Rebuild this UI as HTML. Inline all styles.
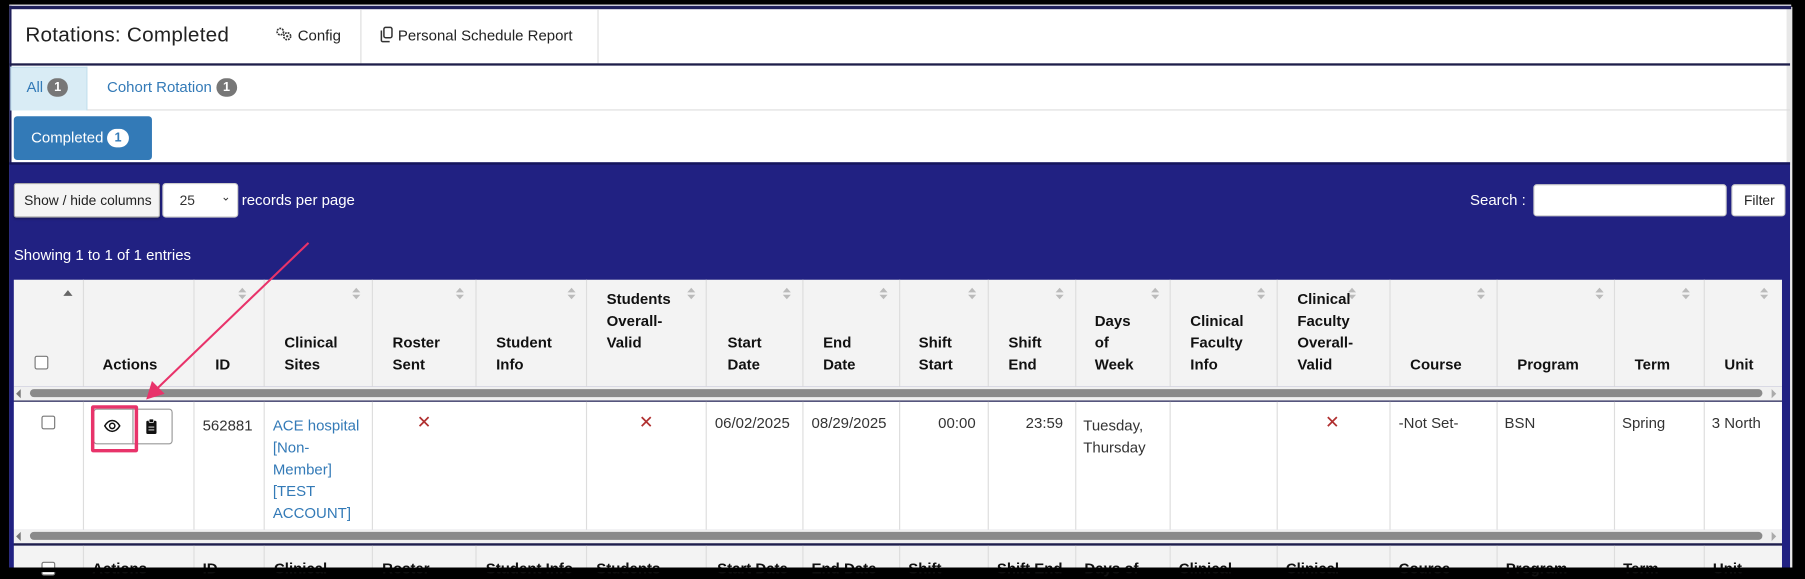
<!DOCTYPE html>
<html><head><meta charset="utf-8">
<style>
*{box-sizing:border-box;margin:0;padding:0}
html,body{width:1805px;height:572px;overflow:hidden;background:#000}
#s{position:absolute;left:0;top:0;width:1568px;height:497px;transform:scale(1.15115);transform-origin:0 0;font-family:"Liberation Sans",Arial,sans-serif;font-size:13px;color:#333}
.a{position:absolute}
.hd{font-weight:bold;color:#111;line-height:19px}
.sort{position:absolute;top:10px;width:8px;height:14px}
.x{color:#b03030;font-size:15px}
.lnk{color:#337ab7}
.cb{position:absolute;width:12px;height:12px;border:1px solid #777;border-radius:2px;background:#fff}
.vl{position:absolute;width:1px;background:#ddd}
.badge{display:inline-block;background:#777;color:#fff;border-radius:9px;font-size:11px;font-weight:bold;padding:1px 6px;line-height:14px;vertical-align:1px}
</style></head><body>
<div id="s">
<!-- frame -->
<div class="a" style="left:8px;top:4px;width:1548px;height:489px;background:#fff"></div>
<div class="a" style="left:1552px;top:6px;width:5px;height:487px;background:#e8e8e8"></div>
<div class="a" style="left:8px;top:5px;width:1548px;height:3px;background:#1e1e5a"></div>
<div class="a" style="left:8px;top:5px;width:2px;height:488px;background:#1e1e5a"></div>
<!-- header -->
<div class="a" style="left:22px;top:20px;font-size:18px;color:#222;letter-spacing:0.2px">Rotations: Completed</div>
<div class="a" style="left:239px;top:23px;font-size:13px;color:#222">
<svg width="16" height="13" viewBox="0 0 16 13" style="vertical-align:-1px"><circle cx="4.5" cy="4.5" r="2.8" fill="none" stroke="#333" stroke-width="1.4" stroke-dasharray="1.6 0.8"/><circle cx="10.5" cy="8.5" r="3" fill="none" stroke="#333" stroke-width="1.4" stroke-dasharray="1.6 0.8"/><circle cx="10.5" cy="8.5" r="1" fill="#333"/></svg> Config</div>
<div class="a" style="left:313px;top:8px;width:1px;height:47px;background:#ddd"></div>
<div class="a" style="left:330px;top:23px;font-size:13px;color:#222">
<svg width="12" height="14" viewBox="0 0 12 14" style="vertical-align:-2px"><rect x="3.5" y="0.8" width="7" height="9" rx="1.5" fill="none" stroke="#333" stroke-width="1.3"/><path d="M1.3 3.5v8.5a1.2 1.2 0 0 0 1.2 1.2h6" fill="none" stroke="#333" stroke-width="1.3"/></svg> Personal Schedule Report</div>
<div class="a" style="left:519px;top:8px;width:1px;height:47px;background:#ddd"></div>
<div class="a" style="left:8px;top:55px;width:1547px;height:2px;background:#1e1e4a"></div>
<!-- tabs -->
<div class="a" style="left:9px;top:58px;width:67px;height:38px;background:#d9ecf5;border:1px solid #c4e0ee;border-bottom:none"></div>
<div class="a" style="left:23px;top:68px;color:#337ab7">All <span class="badge">1</span></div>
<div class="a" style="left:93px;top:68px;color:#337ab7">Cohort Rotation <span class="badge">1</span></div>
<div class="a" style="left:76px;top:95px;width:1479px;height:1px;background:#ddd"></div>
<div class="a" style="left:12px;top:101px;width:120px;height:38px;background:#337ab7;border-radius:3px;color:#fff;padding:11px 0 0 15px">Completed <span class="badge" style="background:#fff;color:#337ab7">1</span></div>
<!-- navy -->
<div class="a" style="left:8px;top:141px;width:1547px;height:352px;background:#212182"></div>
<div class="a" style="left:8px;top:141px;width:1547px;height:2px;background:#15155a"></div>
<div class="a" style="left:12px;top:159px;width:127px;height:30px;background:#f4f4f4;border:1px solid #aaa;border-radius:2px;color:#222;font-size:12px;padding:7px 0 0 8px;box-shadow:0 1px 2px rgba(0,0,0,.3)">Show / hide columns</div>
<div class="a" style="left:141px;top:159px;width:66px;height:30px;background:#fff;border:1px solid #ccc;border-radius:3px;color:#333;font-size:12px;padding:7px 0 0 14px">25<span style="position:absolute;left:50px;top:6px;font-size:10px">&#8964;</span></div>
<div class="a" style="left:210px;top:166px;color:#fff">records per page</div>
<div class="a" style="left:1277px;top:166px;color:#fff">Search :</div>
<div class="a" style="left:1332px;top:160px;width:168px;height:28px;background:#fff;border:1px solid #ccc;border-radius:3px"></div>
<div class="a" style="left:1504px;top:160px;width:47px;height:28px;background:#fff;border:1px solid #ccc;border-radius:3px;color:#222;font-size:12px;padding:6px 0 0 10px">Filter</div>
<div class="a" style="left:12px;top:214px;color:#fff">Showing 1 to 1 of 1 entries</div>
<!-- table -->
<div class="a" style="left:12px;top:243px;width:1536px;height:93px;background:#f3f3f3"></div>
<div class="a" style="left:12px;top:336px;width:1536px;height:12px;background:#f0f0f0"></div>
<div class="a" style="left:26px;top:338px;width:1505px;height:7px;background:#8a8a8a;border-radius:4px"></div>
<div class="a" style="left:14px;top:338px;width:0;height:0;border-top:4px solid transparent;border-bottom:4px solid transparent;border-right:4px solid #777"></div>
<div class="a" style="left:1539px;top:338px;width:0;height:0;border-top:4px solid transparent;border-bottom:4px solid transparent;border-left:4px solid #aaa"></div>
<div class="a" style="left:12px;top:348px;width:1536px;height:1px;background:#1e1e4a"></div>
<div class="a" style="left:12px;top:349px;width:1536px;height:111px;background:#fff"></div>
<div class="a" style="left:12px;top:460px;width:1536px;height:12px;background:#f0f0f0"></div>
<div class="a" style="left:26px;top:462px;width:1505px;height:7px;background:#8a8a8a;border-radius:4px"></div>
<div class="a" style="left:14px;top:462px;width:0;height:0;border-top:4px solid transparent;border-bottom:4px solid transparent;border-right:4px solid #777"></div>
<div class="a" style="left:1539px;top:462px;width:0;height:0;border-top:4px solid transparent;border-bottom:4px solid transparent;border-left:4px solid #aaa"></div>
<div class="a" style="left:12px;top:472px;width:1536px;height:2px;background:#1e1e4a"></div>
<div class="a" style="left:12px;top:474px;width:1536px;height:19px;background:#f3f3f3"></div>

<!-- vertical lines -->
<div class="vl" style="left:72px;top:243px;height:93px"></div><div class="vl" style="left:72px;top:349px;height:111px"></div><div class="vl" style="left:72px;top:474px;height:19px"></div>
<div class="vl" style="left:168px;top:243px;height:93px"></div><div class="vl" style="left:168px;top:349px;height:111px"></div><div class="vl" style="left:168px;top:474px;height:19px"></div>
<div class="vl" style="left:229px;top:243px;height:93px"></div><div class="vl" style="left:229px;top:349px;height:111px"></div><div class="vl" style="left:229px;top:474px;height:19px"></div>
<div class="vl" style="left:323px;top:243px;height:93px"></div><div class="vl" style="left:323px;top:349px;height:111px"></div><div class="vl" style="left:323px;top:474px;height:19px"></div>
<div class="vl" style="left:413px;top:243px;height:93px"></div><div class="vl" style="left:413px;top:474px;height:19px"></div>
<div class="vl" style="left:509px;top:243px;height:93px"></div><div class="vl" style="left:509px;top:349px;height:111px"></div><div class="vl" style="left:509px;top:474px;height:19px"></div>
<div class="vl" style="left:613px;top:243px;height:93px"></div><div class="vl" style="left:613px;top:349px;height:111px"></div><div class="vl" style="left:613px;top:474px;height:19px"></div>
<div class="vl" style="left:697px;top:243px;height:93px"></div><div class="vl" style="left:697px;top:349px;height:111px"></div><div class="vl" style="left:697px;top:474px;height:19px"></div>
<div class="vl" style="left:781px;top:243px;height:93px"></div><div class="vl" style="left:781px;top:349px;height:111px"></div><div class="vl" style="left:781px;top:474px;height:19px"></div>
<div class="vl" style="left:858px;top:243px;height:93px"></div><div class="vl" style="left:858px;top:349px;height:111px"></div><div class="vl" style="left:858px;top:474px;height:19px"></div>
<div class="vl" style="left:934px;top:243px;height:93px"></div><div class="vl" style="left:934px;top:349px;height:111px"></div><div class="vl" style="left:934px;top:474px;height:19px"></div>
<div class="vl" style="left:1016px;top:243px;height:93px"></div><div class="vl" style="left:1016px;top:349px;height:111px"></div><div class="vl" style="left:1016px;top:474px;height:19px"></div>
<div class="vl" style="left:1109px;top:243px;height:93px"></div><div class="vl" style="left:1109px;top:349px;height:111px"></div><div class="vl" style="left:1109px;top:474px;height:19px"></div>
<div class="vl" style="left:1207px;top:243px;height:93px"></div><div class="vl" style="left:1207px;top:349px;height:111px"></div><div class="vl" style="left:1207px;top:474px;height:19px"></div>
<div class="vl" style="left:1300px;top:243px;height:93px"></div><div class="vl" style="left:1300px;top:349px;height:111px"></div><div class="vl" style="left:1300px;top:474px;height:19px"></div>
<div class="vl" style="left:1402px;top:243px;height:93px"></div><div class="vl" style="left:1402px;top:349px;height:111px"></div><div class="vl" style="left:1402px;top:474px;height:19px"></div>
<div class="vl" style="left:1480px;top:243px;height:93px"></div><div class="vl" style="left:1480px;top:349px;height:111px"></div><div class="vl" style="left:1480px;top:474px;height:19px"></div>

<!-- sort arrows -->
<div class="a" style="left:55px;top:252px;width:0;height:0;border-left:4px solid transparent;border-right:4px solid transparent;border-bottom:5px solid #666"></div>
<svg class="a" style="left:0;top:0" width="1568" height="300"><g fill="#bbb">
<path d="M207 254l3.5-4 3.5 4zM207 256l3.5 4 3.5-4z"/>
<path d="M306 254l3.5-4 3.5 4zM306 256l3.5 4 3.5-4z"/>
<path d="M396 254l3.5-4 3.5 4zM396 256l3.5 4 3.5-4z"/>
<path d="M493 254l3.5-4 3.5 4zM493 256l3.5 4 3.5-4z"/>
<path d="M597 254l3.5-4 3.5 4zM597 256l3.5 4 3.5-4z"/>
<path d="M680 254l3.5-4 3.5 4zM680 256l3.5 4 3.5-4z"/>
<path d="M764 254l3.5-4 3.5 4zM764 256l3.5 4 3.5-4z"/>
<path d="M841 254l3.5-4 3.5 4zM841 256l3.5 4 3.5-4z"/>
<path d="M917 254l3.5-4 3.5 4zM917 256l3.5 4 3.5-4z"/>
<path d="M1000 254l3.5-4 3.5 4zM1000 256l3.5 4 3.5-4z"/>
<path d="M1092 254l3.5-4 3.5 4zM1092 256l3.5 4 3.5-4z"/>
<path d="M1171 254l3.5-4 3.5 4zM1171 256l3.5 4 3.5-4z"/>
<path d="M1283 254l3.5-4 3.5 4zM1283 256l3.5 4 3.5-4z"/>
<path d="M1386 254l3.5-4 3.5 4zM1386 256l3.5 4 3.5-4z"/>
<path d="M1386 254l3.5-4 3.5 4z"/>
<path d="M1461 254l3.5-4 3.5 4zM1461 256l3.5 4 3.5-4z"/>
<path d="M1529 254l3.5-4 3.5 4zM1529 256l3.5 4 3.5-4z"/>
</g></svg>

<!-- header text (bottom line at 317 center) -->
<div class="cb" style="left:30px;top:309px"></div>
<div class="a hd" style="left:89px;top:307px">Actions</div>
<div class="a hd" style="left:187px;top:307px">ID</div>
<div class="a hd" style="left:247px;top:288px">Clinical<br>Sites</div>
<div class="a hd" style="left:341px;top:288px">Roster<br>Sent</div>
<div class="a hd" style="left:431px;top:288px">Student<br>Info</div>
<div class="a hd" style="left:527px;top:250px">Students<br>Overall-<br>Valid</div>
<div class="a hd" style="left:632px;top:288px">Start<br>Date</div>
<div class="a hd" style="left:715px;top:288px">End<br>Date</div>
<div class="a hd" style="left:798px;top:288px">Shift<br>Start</div>
<div class="a hd" style="left:876px;top:288px">Shift<br>End</div>
<div class="a hd" style="left:951px;top:269px">Days<br>of<br>Week</div>
<div class="a hd" style="left:1034px;top:269px">Clinical<br>Faculty<br>Info</div>
<div class="a hd" style="left:1127px;top:250px">Clinical<br>Faculty<br>Overall-<br>Valid</div>
<div class="a hd" style="left:1225px;top:307px">Course</div>
<div class="a hd" style="left:1318px;top:307px">Program</div>
<div class="a hd" style="left:1420px;top:307px">Term</div>
<div class="a hd" style="left:1498px;top:307px">Unit</div>

<!-- row -->
<div class="cb" style="left:36px;top:361px"></div>
<div class="a" style="left:81px;top:355px;width:69px;height:31px;border:1px solid #999;border-radius:3px;background:#fff"></div>
<div class="a" style="left:115px;top:355px;width:1px;height:31px;background:#999"></div>
<svg class="a" style="left:90px;top:364px" width="15" height="12" viewBox="0 0 15 12"><path d="M1 6C3 2.5 5 1.3 7.5 1.3S12 2.5 14 6C12 9.5 10 10.7 7.5 10.7S3 9.5 1 6z" fill="none" stroke="#111" stroke-width="1.3"/><circle cx="7.5" cy="6" r="2.3" fill="none" stroke="#111" stroke-width="1.3"/></svg>
<svg class="a" style="left:127px;top:364px" width="9" height="13" viewBox="0 0 9 13"><rect x="0" y="1.5" width="9" height="11.5" rx="1.3" fill="#111"/><rect x="2.5" y="0" width="4" height="3" rx="0.8" fill="#111" stroke="#fff" stroke-width="0.6"/><path d="M2 7h5M2 9.5h5" stroke="#fff" stroke-width="0.8"/></svg>
<div class="a" style="left:79px;top:352px;width:41px;height:41px;border:3px solid #e8336a;border-radius:2px"></div>

<div class="a" style="left:176px;top:360px;line-height:19px">562881</div>
<div class="a lnk" style="left:237px;top:360px;line-height:19px">ACE hospital<br>[Non-<br>Member]<br>[TEST<br>ACCOUNT]</div>
<div class="a x" style="left:362px;top:358px">&#x2715;</div>
<div class="a x" style="left:555px;top:358px">&#x2715;</div>
<div class="a" style="left:621px;top:360px">06/02/2025</div>
<div class="a" style="left:705px;top:360px">08/29/2025</div>
<div class="a" style="left:815px;top:360px">00:00</div>
<div class="a" style="left:891px;top:360px">23:59</div>
<div class="a" style="left:941px;top:360px;line-height:19px">Tuesday,<br>Thursday</div>
<div class="a x" style="left:1151px;top:358px">&#x2715;</div>
<div class="a" style="left:1215px;top:360px">-Not Set-</div>
<div class="a" style="left:1307px;top:360px">BSN</div>
<div class="a" style="left:1409px;top:360px">Spring</div>
<div class="a" style="left:1487px;top:360px">3 North</div>

<!-- second header (cut) -->
<div class="cb" style="left:36px;top:488px"></div>
<div class="a hd" style="left:80px;top:484px">Actions</div>
<div class="a hd" style="left:176px;top:484px">ID</div>
<div class="a hd" style="left:238px;top:484px">Clinical</div>
<div class="a hd" style="left:332px;top:484px">Roster</div>
<div class="a hd" style="left:422px;top:484px">Student Info</div>
<div class="a hd" style="left:518px;top:484px">Students</div>
<div class="a hd" style="left:623px;top:484px">Start Date</div>
<div class="a hd" style="left:705px;top:484px">End Date</div>
<div class="a hd" style="left:789px;top:484px">Shift</div>
<div class="a hd" style="left:866px;top:484px">Shift End</div>
<div class="a hd" style="left:942px;top:484px">Days of</div>
<div class="a hd" style="left:1024px;top:484px">Clinical</div>
<div class="a hd" style="left:1117px;top:484px">Clinical</div>
<div class="a hd" style="left:1215px;top:484px">Course</div>
<div class="a hd" style="left:1308px;top:484px">Program</div>
<div class="a hd" style="left:1410px;top:484px">Term</div>
<div class="a hd" style="left:1488px;top:484px">Unit</div>

<!-- bottom black -->
<div class="a" style="left:0;top:493px;width:1568px;height:4px;background:#000"></div>

<!-- arrow -->
<svg class="a" style="left:0;top:0" width="1568" height="497"><line x1="268" y1="211" x2="136" y2="338" stroke="#e8336a" stroke-width="1.8"/><path d="M127 347L132 331L143 342Z" fill="#e8336a"/></svg>
</div>
</body></html>
